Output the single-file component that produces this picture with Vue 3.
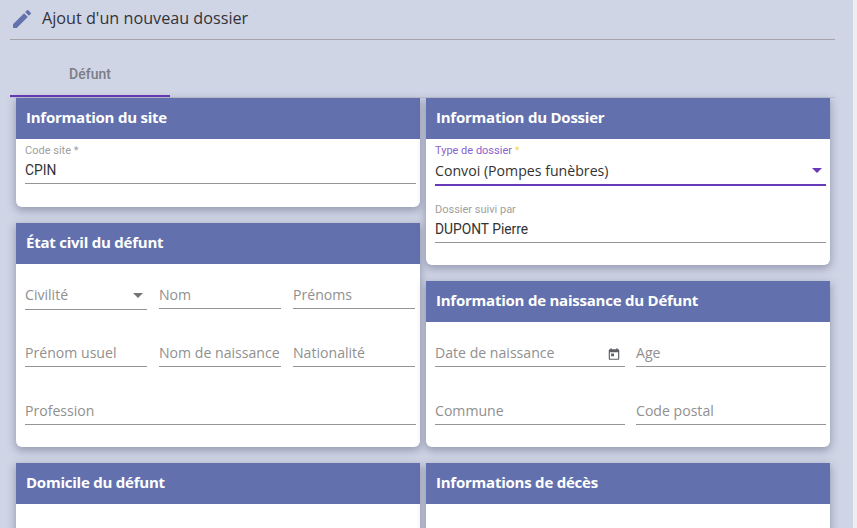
<script setup>
const civilFields = [
  { label: "Civilité", select: true },
  { label: "Nom" },
  { label: "Prénoms" },
  { label: "Prénom usuel" },
  { label: "Nom de naissance" },
  { label: "Nationalité" },
];
</script>

<template>
  <div class="page">
    <header class="page-title">
      <svg class="pencil" viewBox="0 0 24 24" width="24" height="24">
        <path d="M3 17.25V21h3.75L17.81 9.94l-3.75-3.75L3 17.25zM20.71 7.04a1 1 0 0 0 0-1.41l-2.34-2.34a1 1 0 0 0-1.41 0l-1.83 1.83 3.75 3.75 1.83-1.83z" />
      </svg>
      <h1>Ajout d'un nouveau dossier</h1>
    </header>

    <nav class="tabs">
      <div class="tab">Défunt</div>
    </nav>

    <main class="columns">
      <div class="column">
        <section class="card">
          <h2>Information du site</h2>
          <div class="card-body compact site-body">
            <div class="filled">
              <label>Code site *</label>
              <div class="value">CPIN</div>
            </div>
          </div>
        </section>

        <section class="card">
          <h2>État civil du défunt</h2>
          <div class="card-body civil-body">
            <div class="grid three">
              <div
                v-for="field in civilFields"
                :key="field.label"
                class="empty"
                :class="{ select: field.select }"
              >
                <span>{{ field.label }}</span>
                <i v-if="field.select" class="arrow"></i>
              </div>
            </div>
            <div class="empty">
              <span>Profession</span>
            </div>
          </div>
        </section>

        <section class="card">
          <h2>Domicile du défunt</h2>
          <div class="card-body tail"></div>
        </section>
      </div>

      <div class="column">
        <section class="card">
          <h2>Information du Dossier</h2>
          <div class="card-body compact">
            <div class="filled focused">
              <label>Type de dossier <em>*</em></label>
              <div class="value">
                Convoi (Pompes funèbres)
                <i class="arrow purple"></i>
              </div>
            </div>
            <div class="filled second">
              <label>Dossier suivi par</label>
              <div class="value">DUPONT Pierre</div>
            </div>
          </div>
        </section>

        <section class="card">
          <h2>Information de naissance du Défunt</h2>
          <div class="card-body birth-body">
            <div class="grid two">
              <div class="empty">
                <span>Date de naissance</span>
                <svg class="calendar" viewBox="0 0 24 24" width="14" height="14">
                  <path d="M19 4h-1V2h-2v2H8V2H6v2H5a2 2 0 0 0-2 2v14a2 2 0 0 0 2 2h14a2 2 0 0 0 2-2V6a2 2 0 0 0-2-2zm0 16H5V9h14v11zM7 11h5v5H7z" />
                </svg>
              </div>
              <div class="empty"><span>Age</span></div>
              <div class="empty"><span>Commune</span></div>
              <div class="empty"><span>Code postal</span></div>
            </div>
          </div>
        </section>

        <section class="card">
          <h2>Informations de décès</h2>
          <div class="card-body tail"></div>
        </section>
      </div>
    </main>
  </div>
</template>

<style>
html,
body {
  margin: 0;
  background: #eeeeee;
}
</style>

<style scoped>
.page {
  box-sizing: border-box;
  width: 853px;
  height: 528px;
  overflow: hidden;
  padding: 0 18px 0 10px;
  background: #d0d5e6;
  font-family: "Open Sans", "Noto Sans", sans-serif;
}

.page-title {
  display: flex;
  align-items: center;
  gap: 8px;
  height: 39px;
  border-bottom: 1px solid #a5a5a8;
}

.pencil {
  fill: #6472ac;
  margin-top: -1px;
}

.page-title h1 {
  margin: -3px 0 0;
  font-size: 16.2px;
  font-weight: 400;
  color: #333338;
}

.tabs {
  height: 57px;
  border-bottom: 1px solid #c0c4d4;
}

.tab {
  box-sizing: border-box;
  width: 160px;
  height: 57px;
  padding-top: 25px;
  border-bottom: 2px solid #673ab7;
  text-align: center;
  font-family: Roboto, sans-serif;
  font-size: 14px;
  font-weight: 500;
  color: #7c7d85;
  line-height: 18px;
}

.columns {
  display: flex;
  gap: 6px;
  padding-left: 6px;
}

.column {
  display: flex;
  flex-direction: column;
  gap: 16px;
  width: 404px;
}

.card {
  background: #fff;
  border-radius: 0 0 6px 6px;
  box-shadow: 0 3px 8px 1px rgba(60, 65, 95, 0.38);
}

.card h2 {
  margin: 0;
  height: 41px;
  padding: 0 10px;
  background: #6271ad;
  color: #fff;
  font-size: 15px;
  font-weight: 700;
  letter-spacing: -0.23px;
  line-height: 39px;
}

.card-body {
  padding: 0 4px 0 9px;
}

.compact {
  padding-top: 5px;
  padding-bottom: 22px;
}

.site-body {
  padding-bottom: 23px;
}

.filled {
  border-bottom: 1px solid #949494;
  height: 39px;
}

.filled label {
  display: block;
  font-family: Roboto, sans-serif;
  font-size: 11px;
  line-height: 13px;
  color: #a0a0a0;
}

.filled .value {
  position: relative;
  margin-top: 3px;
  font-family: Roboto, sans-serif;
  font-size: 13.8px;
  line-height: 20px;
  color: #333;
}

.focused {
  height: 40px;
  border-bottom: 2px solid #673ab7;
}

.focused label {
  color: #8a63cc;
}

.focused em {
  font-style: normal;
  color: #f6d55c;
}

.filled.focused .value {
  margin-top: 4px;
  font-family: "Open Sans", sans-serif;
  font-size: 14.15px;
}

.second {
  margin-top: 17px;
}

.arrow {
  position: absolute;
  right: 4px;
  top: 7px;
  width: 0;
  height: 0;
  border-left: 5px solid transparent;
  border-right: 5px solid transparent;
  border-top: 5px solid #757575;
}

.arrow.purple {
  border-top-color: #673ab7;
}

.civil-body {
  padding-top: 15px;
  padding-bottom: 22px;
}

.birth-body {
  padding-top: 15px;
  padding-bottom: 22px;
}

.grid {
  display: grid;
  row-gap: 28px;
}

.three {
  grid-template-columns: repeat(3, 122px);
  column-gap: 12px;
  margin-bottom: 28px;
}

.two {
  grid-template-columns: repeat(2, 190px);
  column-gap: 11px;
}

.empty {
  position: relative;
  box-sizing: border-box;
  height: 30px;
  padding-top: 7px;
  border-bottom: 1px solid #949494;
  font-size: 14.1px;
  line-height: 18px;
  color: #909090;
  white-space: nowrap;
}

.select {
  height: 31px;
  margin-bottom: -1px;
}

.select .arrow {
  top: 14px;
  right: 4px;
}

.calendar {
  position: absolute;
  right: 4px;
  top: 10px;
  fill: #5f6066;
}

.tail {
  height: 40px;
}
</style>
